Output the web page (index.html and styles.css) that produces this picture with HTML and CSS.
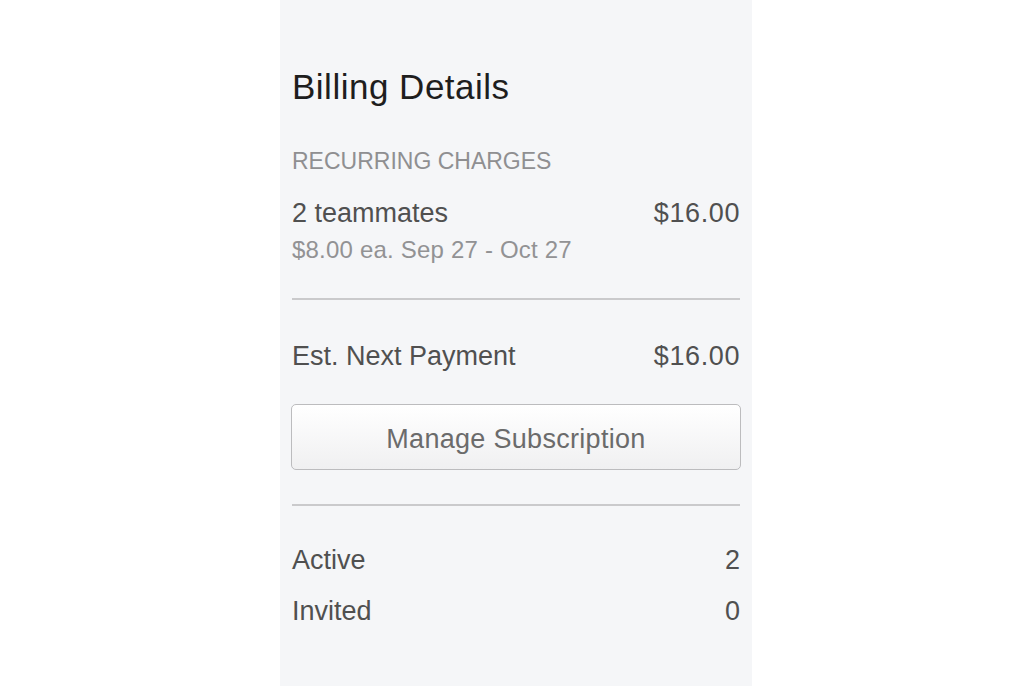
FILE: index.html
```html
<!DOCTYPE html>
<html lang="en">
<head>
    <meta charset="UTF-8">
    <meta name="viewport" content="width=device-width, initial-scale=1.0">
    <title>Billing Details</title>
    <link rel="stylesheet" href="styles.css">
</head>
<body>
    <div id="billing-panel">
        <h1 class="panel-title">Billing Details</h1>
        <div class="section-label">RECURRING CHARGES</div>
        <div class="line-row charge-row">
            <span>2 teammates</span>
            <span class="amount">$16.00</span>
        </div>
        <div class="charge-detail">$8.00 ea. Sep 27 - Oct 27</div>
        <hr class="divider">
        <div class="line-row payment-row">
            <span>Est. Next Payment</span>
            <span class="amount">$16.00</span>
        </div>
        <button class="manage-btn">Manage Subscription</button>
        <hr class="divider divider-low">
        <div class="line-row stat-row stat-active">
            <span>Active</span>
            <span>2</span>
        </div>
        <div class="line-row stat-row stat-invited">
            <span>Invited</span>
            <span>0</span>
        </div>
    </div>
</body>
</html>
```

FILE: styles.css
```css
body, html {
    margin: 0;
    height: 100%;
    background-color: #ffffff;
    font-family: "Liberation Sans", Arial, sans-serif;
}

#billing-panel {
    width: 472px;
    min-height: 100vh;
    margin: 0 auto;
    padding: 66px 12px 0;
    box-sizing: border-box;
    background-color: #f5f6f8;
}

.panel-title {
    margin: 0 0 39px;
    font-size: 35px;
    line-height: 42px;
    font-weight: normal;
    letter-spacing: 0.5px;
    color: #1e1e1e;
}

.section-label {
    margin-bottom: 22px;
    font-size: 23px;
    line-height: 28px;
    color: #8f8f91;
}

.line-row {
    display: flex;
    justify-content: space-between;
    font-size: 27px;
    line-height: 32px;
    color: #505050;
}

.amount {
    letter-spacing: 0.6px;
}

.charge-row {
    margin-bottom: 7px;
}

.charge-detail {
    margin-bottom: 34px;
    font-size: 24px;
    line-height: 28px;
    letter-spacing: 0.2px;
    color: #929294;
}

.divider {
    height: 2px;
    margin: 0;
    border: 0;
    background-color: #cacacc;
}

.payment-row {
    margin-top: 40px;
}

.manage-btn {
    display: block;
    width: calc(100% + 2px);
    height: 66px;
    margin: 32px -1px 0;
    padding: 4px 0 0;
    border: 1px solid #bcbcbe;
    border-radius: 5px;
    background: linear-gradient(#ffffff, #f0f0f1);
    font-family: inherit;
    font-size: 27px;
    letter-spacing: 0.3px;
    color: #6b6b6b;
    cursor: pointer;
}

.divider-low {
    margin-top: 34px;
}

.stat-active {
    margin-top: 38px;
}

.stat-invited {
    margin-top: 19px;
}
```
